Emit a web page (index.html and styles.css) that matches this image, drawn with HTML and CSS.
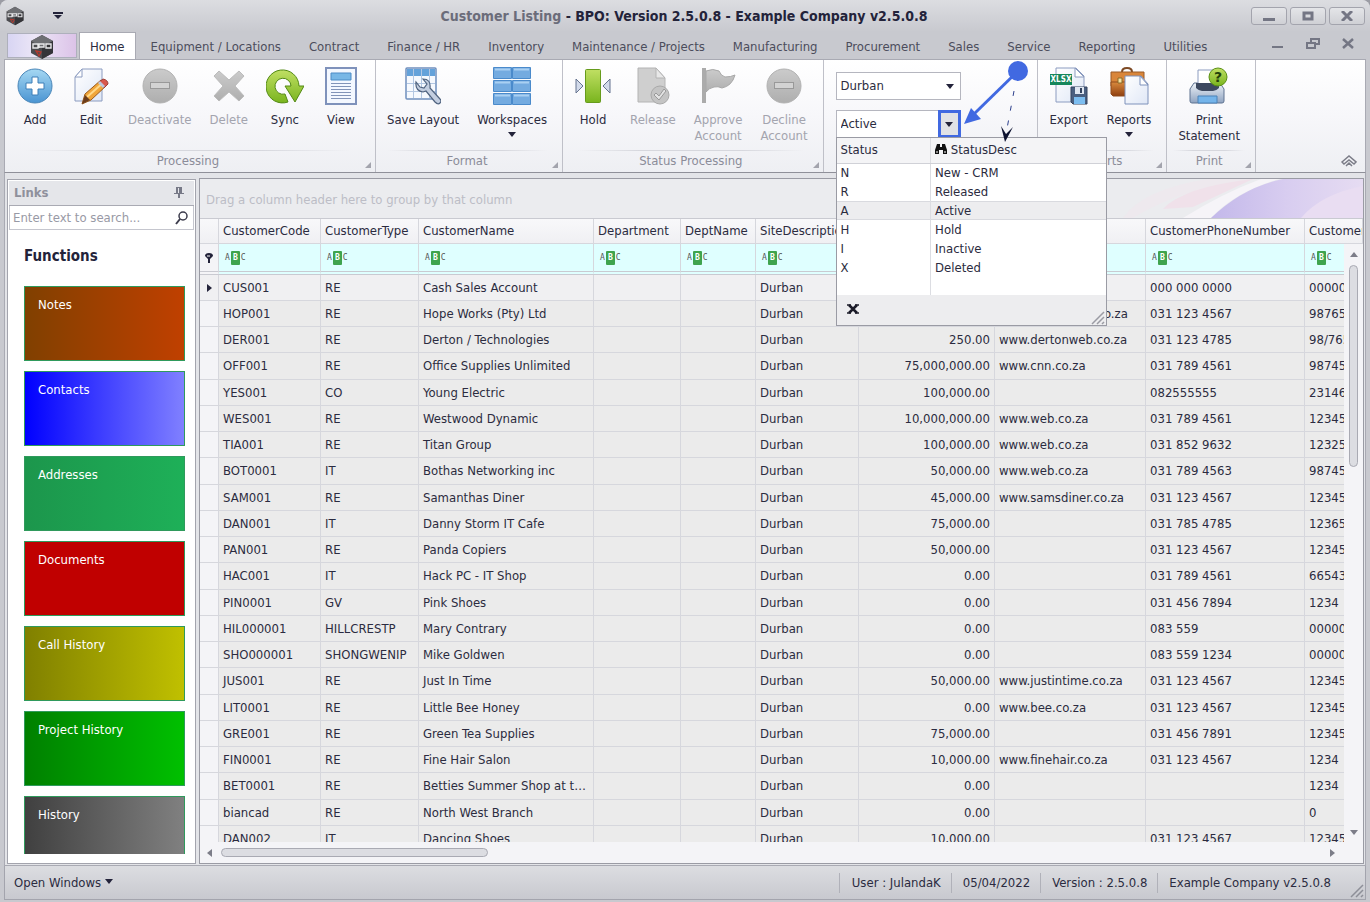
FILE: index.html
```html
<!DOCTYPE html>
<html lang="en">
<head>
  <meta charset="UTF-8">
  <title>Customer Listing - BPO</title>
  <meta name="viewport" content="width=device-width, initial-scale=1.0">
  <link rel="stylesheet" href="styles.css">
</head>
<body>
  <!-- shared icons -->
  <svg class="defs" width="0" height="0" aria-hidden="true">
    <defs>
      <linearGradient id="blueG" x1="0" y1="0" x2="0" y2="1"><stop offset="0" stop-color="#a5d8f3"/><stop offset="1" stop-color="#4a94d2"/></linearGradient>
      <linearGradient id="greyG" x1="0" y1="0" x2="0" y2="1"><stop offset="0" stop-color="#cbcbcb"/><stop offset="1" stop-color="#aeaeae"/></linearGradient>
      <linearGradient id="greenG" x1="0" y1="0" x2="0" y2="1"><stop offset="0" stop-color="#c0df63"/><stop offset="1" stop-color="#79b41e"/></linearGradient>
      <linearGradient id="pageG" x1="0" y1="0" x2="1" y2="1"><stop offset="0" stop-color="#ffffff"/><stop offset="1" stop-color="#dfe7f6"/></linearGradient>
      <linearGradient id="steelG" x1="0" y1="0" x2="0" y2="1"><stop offset="0" stop-color="#eef3f9"/><stop offset="1" stop-color="#8fa3c0"/></linearGradient>
      <linearGradient id="brownG" x1="0" y1="0" x2="0" y2="1"><stop offset="0" stop-color="#d98a3d"/><stop offset="1" stop-color="#8f3f10"/></linearGradient>
      <symbol id="logo" viewBox="0 0 24 26">
        <path d="M12 1 23 7v12l-11 6L1 19V7z" fill="#4b4b4f"/>
        <path d="M12 1 23 7l-11 6L1 7z" fill="#6e6f73"/>
        <path d="M12 13v12l11-6V7z" fill="#343438"/>
        <path d="M3 10h5v4H3zM9 14v-4h5v3H9M16 10h5v4h-5z" fill="none" stroke="#e8e8ea" stroke-width="1.4"/>
        <path d="m6 17 5 1-2 4z" fill="none" stroke="#b5392f" stroke-width="1.3"/>
      </symbol>
      <symbol id="minus" viewBox="0 0 36 36">
        <circle cx="18" cy="18" r="17" fill="url(#greyG)" stroke="#b2b2b2"/>
        <rect x="8.500" y="14.500" width="19" height="6" fill="#d3d3d3" stroke="#999"/>
      </symbol>
    </defs>
  </svg>

  <div class="window">
    <header class="titlebar">
      <svg class="app-icon" width="20" height="20"><use href="#logo"/></svg>
      <svg class="quick" width="10" height="8" viewBox="0 0 10 8"><path d="M0 0h10v2H0zM1 3h8L5 7z" fill="#23233a"/></svg>
      <h1><span>Customer Listing</span> - BPO: Version 2.5.0.8 - Example Company v2.5.0.8</h1>
      <div class="win-buttons">
        <button aria-label="Minimize"><svg width="12" height="10" viewBox="0 0 12 10"><path d="M0 7h12v3H0z" fill="#747684"/></svg></button>
        <button aria-label="Maximize"><svg width="12" height="10" viewBox="0 0 12 10"><path d="M2 2h8v6H2z" fill="none" stroke="#747684" stroke-width="3"/></svg></button>
        <button aria-label="Close"><svg width="12" height="10" viewBox="0 0 12 10"><path d="m1 0 10 10M11 0 1 10" stroke="#747684" stroke-width="3"/></svg></button>
      </div>
    </header>

    <nav class="tabs">
      <button class="app-button" aria-label="Application menu"><svg width="24" height="26"><use href="#logo"/></svg></button>
      <a class="active" href="#">Home</a>
      <a href="#">Equipment / Locations</a>
      <a href="#">Contract</a>
      <a href="#">Finance / HR</a>
      <a href="#">Inventory</a>
      <a href="#">Maintenance / Projects</a>
      <a href="#">Manufacturing</a>
      <a href="#">Procurement</a>
      <a href="#">Sales</a>
      <a href="#">Service</a>
      <a href="#">Reporting</a>
      <a href="#">Utilities</a>
      <div class="mdi-buttons">
        <button aria-label="Minimize window"><svg width="14" height="12" viewBox="0 0 14 12"><path d="M1 8h11v2H1z" fill="#747684"/></svg></button>
        <button aria-label="Restore window"><svg width="14" height="12" viewBox="0 0 14 12"><path d="M5 4V1h8v5h-3M1 5h8v5H1z" fill="none" stroke="#747684" stroke-width="2"/></svg></button>
        <button aria-label="Close window"><svg width="14" height="12" viewBox="0 0 14 12"><path d="m2 1 10 9M12 1 2 10" stroke="#747684" stroke-width="2.500"/></svg></button>
      </div>
    </nav>

    <section class="ribbon">
      <div class="group">
        <div class="tools">
          <button class="tool"><svg width="36" height="36" viewBox="0 0 36 36"><circle cx="18" cy="18" r="17" fill="url(#blueG)" stroke="#4a86b8"/><path d="M15 9h6v6h6v6h-6v6h-6v-6H9v-6h6z" fill="#fff" stroke="#3d7fb8"/></svg>Add</button>
          <button class="tool"><svg width="36" height="36" viewBox="0 0 36 36"><path d="M9 1h20v32H2V9z" fill="url(#pageG)" stroke="#8c9cc0"/><path d="M9 1v8H2z" fill="#fff" stroke="#8c9cc0"/><path d="m9 36 3-10L28 12l6 5-16 15z" fill="#f0a63a" stroke="#9a5a1c"/><path d="m14 29 17-15" stroke="#ffd98a" stroke-width="2"/><path d="m26 14 4-3q5 1 5 5l-4 4z" fill="#d9574c" stroke="#9d4038"/><path d="m25 15 5 5 2-2-5-5z" fill="#bcc6dc"/><path d="m9 36 3-9 5 5z" fill="#6a3c1c"/></svg>Edit</button>
          <button class="tool" disabled><svg width="36" height="36"><use href="#minus"/></svg>Deactivate</button>
          <button class="tool" disabled><svg width="36" height="36" viewBox="0 0 36 36"><path d="m8 3 10 9 10-9 5 5-9 10 9 10-5 5-10-9-10 9-5-5 9-10L3 8z" fill="url(#greyG)" stroke="#bcbcbc"/></svg>Delete</button>
          <button class="tool"><svg width="38" height="36" viewBox="0 0 38 36"><path d="M22 34A16.500 16.500 0 1 1 33 18h5l-9 16-10-16h6a8 8 0 1 0-6 8z" fill="url(#greenG)" stroke="#548a15"/></svg>Sync</button>
          <button class="tool"><svg width="32" height="38" viewBox="0 0 32 38"><path d="M1 1h30v36H1z" fill="#f4f8ff" stroke="#7f92bb" stroke-width="2"/><path d="M6 6h20v7H6z" fill="#78b7e6" stroke="#4c8bc6"/><path d="M6 16.500h20M6 19.500h20M6 22.500h20M6 25.500h20M6 28.500h20M6 31.500h20" stroke="#8294b8"/></svg>View</button>
        </div>
        <div class="caption">Processing</div>
      </div>
      <div class="group">
        <div class="tools">
          <button class="tool"><svg width="36" height="38" viewBox="0 0 36 38"><rect x="1" y="1" width="30" height="31" rx="1" fill="#f6f9fe" stroke="#6f8fbd" stroke-width="1.500"/><path d="M2 2h28v7H2z" fill="#64a2da"/><path d="M2 16.500h28M2 24.500h28M8.500 2v29M16.500 2v29M24.500 2v29" stroke="#b3c7e2"/><path d="M11 15q-1 9 7 10l3-1 9 11q3 3 5 1t0-4L25 21q1-9-7-9l4 5-3 4-4-1z" fill="#c3cee0" stroke="#50637f" stroke-width="1.200"/></svg>Save Layout</button>
          <button class="tool"><svg width="38" height="38" viewBox="0 0 38 38"><g fill="#74abe0" stroke="#4a8acb"><path d="M.5.5h18v11H.5zM19.500.5h18v11h-18zM.5 13.500h18v11H.5zM19.500 13.500h18v11h-18zM.5 26.500h18v11H.5zM19.500 26.500h18v11h-18z"/></g><path d="M2 2.500h15M21 2.500h15M2 15.500h15M21 15.500h15M2 28.500h15M21 28.500h15" stroke="#a9d0f2" stroke-width="2"/></svg>Workspaces<i class="arrow"></i></button>
        </div>
        <div class="caption">Format</div>
      </div>
      <div class="group">
        <div class="tools">
          <button class="tool"><svg width="36" height="36" viewBox="0 0 36 36"><rect x="10.500" y="1.500" width="15" height="33" rx="1" fill="url(#greenG)" stroke="#669b1c"/><path d="M1 11v14l7-7zM35 11v14l-7-7z" fill="#d2daea" stroke="#65738f"/></svg>Hold</button>
          <button class="tool" disabled><svg width="34" height="38" viewBox="0 0 34 38"><path d="M2 1h18l9 10v24H2z" fill="#cfcfcf" stroke="#b4b4b4"/><path d="M20 1v10h9z" fill="#e8e8e8" stroke="#b4b4b4"/><circle cx="24" cy="28" r="9" fill="#c4c4c4" stroke="#a9a9a9"/><path d="m18 28 2-2 3 3 5-7 2 2-7 9z" fill="#e3e3e3" stroke="#999"/></svg>Release</button>
          <button class="tool" disabled><svg width="36" height="38" viewBox="0 0 36 38"><path d="M2 1h4v35H2z" fill="#ababab"/><path d="M6 4q7-3 13 0 2 5 6 6 6 0 10-2-3 11-13 13-4-2-8-1-5 1-8 5z" fill="url(#greyG)" stroke="#a8a8a8"/></svg>Approve<br>Account</button>
          <button class="tool" disabled><svg width="36" height="36"><use href="#minus"/></svg>Decline<br>Account</button>
        </div>
        <div class="caption">Status Processing</div>
      </div>

      <div class="group filters">
        <select aria-label="Site"><option>Durban</option></select>
        <div class="combo">
          <input type="text" value="Active" aria-label="Status">
          <button aria-label="Open status list"><i class="arrow"></i></button>
        </div>

        <div class="popup">
          <table>
            <thead>
              <tr><th>Status</th><th><svg width="12" height="12" viewBox="0 0 12 12"><path d="M2 1h3v3h2V1h3l2 6v4H8V7H4v4H0V7z" fill="#111"/><path d="M2 8v2M10 8v2" stroke="#fff"/></svg> StatusDesc</th></tr>
            </thead>
            <tbody>
              <tr><td>N</td><td>New - CRM</td></tr>
              <tr><td>R</td><td>Released</td></tr>
              <tr class="selected"><td>A</td><td>Active</td></tr>
              <tr><td>H</td><td>Hold</td></tr>
              <tr><td>I</td><td>Inactive</td></tr>
              <tr><td>X</td><td>Deleted</td></tr>
              <tr class="filler"><td></td><td></td></tr>
            </tbody>
          </table>
          <div class="popup-foot">
            <button aria-label="Clear"><svg width="12" height="10" viewBox="0 0 12 10"><path d="m2 1 8 8M10 1 2 9" stroke="#1b1b28" stroke-width="2.500"/><path d="M0 1h4M8 1h4M0 9h4M8 9h4" stroke="#1b1b28" stroke-width="1.500"/></svg></button>
            <svg width="14" height="14" viewBox="0 0 14 14"><path d="M1 13 13 1M6 13l7-7M11 13l2-2" stroke="#9a9ba3" stroke-width="1.500"/></svg>
          </div>
        </div>

        <!-- callout arrows -->
        <svg class="callout" width="80" height="84" viewBox="0 0 80 84">
          <path d="M56 11 12 54" stroke="#4169e1" stroke-width="3"/>
          <path d="m2 64 7-16 10 11z" fill="#4169e1"/>
          <circle cx="56" cy="11" r="10" fill="#4169e1"/>
          <path d="M52 31 44 74" stroke="#2c3f8c" stroke-dasharray="5 10"/>
          <path d="m43 82-4-16 5 8 7-7z" fill="#0d1230"/>
        </svg>
      </div>

      <div class="group">
        <div class="tools">
          <button class="tool"><svg width="40" height="38" viewBox="0 0 40 38"><path d="M7 1h20l8 8v26H7z" fill="url(#pageG)" stroke="#8c9cc0"/><path d="M26 1v9h9z" fill="#fff" stroke="#8c9cc0"/><path d="M1 7h22v11H1z" fill="#16875c"/><text x="12" y="15" text-anchor="middle" class="xlsx">XLSX</text><path d="M22 20h16v17H24l-2-2z" fill="#4a5f80" stroke="#33435e"/><path d="M26 20h9v7h-9z" fill="#dfe6f1"/><path d="M31 21h2v5h-2z" fill="#33435e"/><path d="M25 30h11v7H25z" fill="#7cbdf0"/></svg>Export</button>
          <button class="tool"><svg width="40" height="38" viewBox="0 0 40 38"><path d="M13 5q0-4 5-4t5 4" fill="none" stroke="#7d4a24" stroke-width="2"/><path d="M2 5h33v14H2z" fill="#d9863a" stroke="#9a5a26"/><path d="M2 15h16v14H4l-2-2z" fill="url(#brownG)" stroke="#8f4b1c"/><path d="M9 11h4v5H9z" fill="#f6e3a5" stroke="#8a6a26"/><path d="M16 9h16l7 8v20H16z" fill="url(#pageG)" stroke="#7f92bb"/><path d="M31 9v9h8z" fill="#fff" stroke="#7f92bb"/></svg>Reports<i class="arrow"></i></button>
        </div>
        <div class="caption">Reports</div>
      </div>
      <div class="group">
        <div class="tools">
          <button class="tool"><svg width="40" height="38" viewBox="0 0 40 38"><path d="M1 34V22l4-6h26l4 6v12q0 2-2 2H3q-2 0-2-2z" fill="url(#steelG)" stroke="#5f7391"/><path d="M9 3h19v16H9z" fill="#fff" stroke="#8c9cc0"/><path d="M7 16h23v5q-3 3-6 3H13q-3 0-6-3z" fill="#3d4960"/><path d="M9 29h19v7H9z" fill="#74b4ea" stroke="#4b82b8"/><circle cx="29" cy="10" r="9" fill="url(#greenG)" stroke="#5a9015"/><text x="29" y="15" text-anchor="middle" class="question">?</text></svg>Print<br>Statement</button>
        </div>
        <div class="caption">Print</div>
      </div>
      <button class="collapse" aria-label="Collapse ribbon"><svg width="16" height="12" viewBox="0 0 16 12"><path d="m1 7 7-6 7 6-2 2-5-4-5 4zM5 11l3-3 3 3" fill="none" stroke="#7c7d88" stroke-width="1.500"/></svg></button>
    </section>

    <main>
      <aside class="links">
        <h2>Links <svg width="10" height="12" viewBox="0 0 10 12"><path d="M2 0h6v6h2v1H6v4H4V7H0V6h2z" fill="#777987"/><path d="M4 1h1v5H4z" fill="#e5e6ea"/></svg></h2>
        <div class="search">
          <input type="search" placeholder="Enter text to search..." aria-label="Search links">
          <svg width="14" height="14" viewBox="0 0 14 14"><circle cx="8" cy="5" r="4" fill="none" stroke="#3c3c4c" stroke-width="1.500"/><path d="m5 8-4 5" stroke="#3c3c4c" stroke-width="2"/></svg>
        </div>
        <h3>Functions</h3>
        <div class="tiles">
          <button class="notes">Notes</button>
          <button class="contacts">Contacts</button>
          <button class="addresses">Addresses</button>
          <button class="documents">Documents</button>
          <button class="calls">Call History</button>
          <button class="projects">Project History</button>
          <button class="history">History</button>
        </div>
      </aside>

      <section class="grid">
        <div class="group-bar">
          Drag a column header here to group by that column
          <svg width="240" height="39" viewBox="0 0 240 39">
            <defs>
              <linearGradient id="leaf" x1="0" y1="0" x2="1" y2="0"><stop offset="0" stop-color="#c3b8ea"/><stop offset=".5" stop-color="#d8cdf0"/><stop offset="1" stop-color="#e6dcf2"/></linearGradient>
            </defs>
            <path d="M10 39Q60 8 135 0h-50Q20 10 0 39z" fill="#eee9ee"/>
            <path d="M40 30Q60 8 130 0L70 28z" fill="#f0e1ea"/>
            <path d="M60 39Q100 14 138 0h18Q110 14 88 39z" fill="#f6f4f8"/>
            <path d="M88 39Q120 8 160 0h80v10q-20 20-50 29z" fill="url(#leaf)"/>
            <path d="M178 39q20-24 62-32v32z" fill="#e9ddf2"/>
          </svg>
        </div>
        <div class="viewport">
          <table class="customers">
            <colgroup>
              <col class="w-mark"><col class="w-code"><col class="w-type"><col class="w-name"><col class="w-dept"><col class="w-deptname">
              <col class="w-site"><col class="w-limit"><col class="w-web"><col class="w-phone"><col>
            </colgroup>
            <thead>
              <tr>
                <th></th><th>CustomerCode</th><th>CustomerType</th><th>CustomerName</th><th>Department</th><th>DeptName</th>
                <th>SiteDescription</th><th>CreditLimit</th><th>CustomerWebSite</th><th>CustomerPhoneNumber</th><th>CustomerFax</th>
              </tr>
              <tr class="filter-row" id="filterRow">
                <td><svg width="8" height="10" viewBox="0 0 8 10"><path d="M0 3a4 3 0 0 1 8 0L5 6v4H3V6z" fill="#23233a"/><path d="M2 3h3" stroke="#fff"/></svg></td>
              </tr>
            </thead>
            <tbody id="customerRows"></tbody>
          </table>
          <div class="vscroll"><i class="up"></i><span></span><i class="down"></i></div>
        </div>
        <div class="hscroll"><i class="left"></i><span></span><i class="right"></i></div>
      </section>
    </main>

    <footer>
      <button class="open-windows">Open Windows <i class="arrow"></i></button>
      <span>User : JulandaK</span>
      <span>05/04/2022</span>
      <span>Version : 2.5.0.8</span>
      <span>Example Company v2.5.0.8</span>
      <svg class="grip" width="14" height="14" viewBox="0 0 14 14"><path d="M1 13 13 1M6 13l7-7M11 13l2-2" stroke="#8e8f98" stroke-width="1.500"/></svg>
    </footer>
  </div>

  <script>
    // code, type, name, credit limit, website, phone, fax
    const customers = [
      ['CUS001', 'RE', 'Cash Sales Account', '0.00', '', '000 000 0000', '0000000000'],
      ['HOP001', 'RE', 'Hope Works (Pty) Ltd', '10,000.00', 'www.hopeworks.co.za', '031 123 4567', '9876543210'],
      ['DER001', 'RE', 'Derton / Technologies', '250.00', 'www.dertonweb.co.za', '031 123 4785', '98/765432'],
      ['OFF001', 'RE', 'Office Supplies Unlimited', '75,000,000.00', 'www.cnn.co.za', '031 789 4561', '9874561230'],
      ['YES001', 'CO', 'Young Electric', '100,000.00', '', '082555555', '2314678901'],
      ['WES001', 'RE', 'Westwood Dynamic', '10,000,000.00', 'www.web.co.za', '031 789 4561', '1234567890'],
      ['TIA001', 'RE', 'Titan Group', '100,000.00', 'www.web.co.za', '031 852 9632', '1232567890'],
      ['BOT0001', 'IT', 'Bothas Networking inc', '50,000.00', 'www.web.co.za', '031 789 4563', '9874561230'],
      ['SAM001', 'RE', 'Samanthas Diner', '45,000.00', 'www.samsdiner.co.za', '031 123 4567', '1234567890'],
      ['DAN001', 'IT', 'Danny Storm IT Cafe', '75,000.00', '', '031 785 4785', '1236547890'],
      ['PAN001', 'RE', 'Panda Copiers', '50,000.00', '', '031 123 4567', '1234567890'],
      ['HAC001', 'IT', 'Hack PC - IT Shop', '0.00', '', '031 789 4561', '6654321098'],
      ['PIN0001', 'GV', 'Pink Shoes', '0.00', '', '031 456 7894', '1234'],
      ['HIL000001', 'HILLCRESTP', 'Mary Contrary', '0.00', '', '083 559', '0000000000'],
      ['SHO000001', 'SHONGWENIP', 'Mike Goldwen', '0.00', '', '083 559 1234', '0000000000'],
      ['JUS001', 'RE', 'Just In Time', '50,000.00', 'www.justintime.co.za', '031 123 4567', '1234567890'],
      ['LIT0001', 'RE', 'Little Bee Honey', '0.00', 'www.bee.co.za', '031 123 4567', '1234567890'],
      ['GRE001', 'RE', 'Green Tea Supplies', '75,000.00', '', '031 456 7891', '1234567890'],
      ['FIN0001', 'RE', 'Fine Hair Salon', '10,000.00', 'www.finehair.co.za', '031 123 4567', '1234'],
      ['BET0001', 'RE', 'Betties Summer Shop at the Beach', '0.00', '', '', '1234'],
      ['biancad', 'RE', 'North West Branch', '0.00', '', '', '0'],
      ['DAN002', 'IT', 'Dancing Shoes', '10,000.00', '', '031 123 4567', '1234567890']
    ];

    const filterRow = document.getElementById('filterRow');
    for (let i = 0; i < 10; i++) {
      filterRow.insertAdjacentHTML('beforeend', '<td><span class="abc">A<b>B</b>C</span></td>');
    }

    document.getElementById('customerRows').innerHTML = customers.map(function(c, i) {
      const cells = [i === 0 ? '<i class="right"></i>' : '', c[0], c[1], c[2], '', '', 'Durban', c[3], c[4], c[5], c[6]];
      return '<tr><td>' + cells.join('</td><td>') + '</td></tr>';
    }).join('');
  </script>
</body>
</html>
```
FILE: styles.css
```css
* { box-sizing: border-box; }
body { margin: 0; background: #9b9ca4; color: #2b2b40; font-family: "DejaVu Sans Condensed", "Noto Sans", sans-serif; font-size: 13px; line-height: 16px; }
button, input, select { font: inherit; color: inherit; }
button { padding: 0; border: none; background: none; cursor: pointer; }
a { color: inherit; text-decoration: none; }
i { display: inline-block; width: 0; height: 0; }
.defs { position: absolute; }

.window { display: flex; flex-direction: column; height: 100vh; overflow: hidden; padding: 0 4px 2px; border-radius: 8px 8px 0 0; background: #c8c9cf; }

/* title bar */
.titlebar { display: flex; align-items: center; height: 32px; flex: none; margin: 0 -4px; padding: 0 5px; background: linear-gradient(#dcdde1, #c8c9cf); }
.quick { margin-left: 28px; }
.titlebar h1 { flex: 1; margin: 0 0 0 54px; text-align: center; font-size: 14px; color: #23233a; }
.titlebar h1 span { color: #6b6c7a; }
.win-buttons { display: flex; gap: 3px; }
.win-buttons button { width: 36px; height: 18px; border: 1px solid #a3a4ad; border-radius: 3px; background: linear-gradient(#e4e5e8, #cfd0d5); line-height: 0; }

/* ribbon tabs */
.tabs { display: flex; height: 27px; flex: none; color: #4c4d5c; }
.tabs a { padding: 7px 14px 0; white-space: nowrap; }
.tabs a.active { padding: 6px 10px 0; margin-right: 1px; border: 1px solid #a9aab3; border-bottom: none; background: #fff; color: #2b2b40; }
.app-button { width: 70px; height: 25px; margin: 1px 2px 0 3px; border: 1px solid #aeb0bc; background: linear-gradient(90deg, #d8d5f3, #ece6f7 40%, #dcc3e8); line-height: 0; }
.mdi-buttons { display: flex; gap: 21px; margin-left: auto; padding-right: 11px; }

/* ribbon */
.ribbon { display: flex; position: relative; height: 114px; flex: none; border: 1px solid #a9aab3; border-bottom-color: #8f9099; background: linear-gradient(#ffffff, #f7f7fa 50%, #eeeff3); }
.group { display: flex; flex-direction: column; position: relative; padding: 0 6px 0 2px; border-right: 1px solid #bfc0c8; }
.tools { display: flex; flex: 1; }
.tool { display: flex; flex-direction: column; align-items: center; min-width: 56px; padding: 7px 9px 0; white-space: nowrap; text-align: center; }
.tool svg { flex: none; height: 38px; margin-bottom: 7px; }
.tool:disabled { color: #a3a4ae; }
.arrow { border: 4px solid transparent; border-top: 5px solid #23233a; border-bottom: none; }
.tool .arrow { margin-top: 4px; }
.caption { height: 22px; padding-top: 3px; background: linear-gradient(90deg, transparent 5%, #d6d7dd 30%, #d6d7dd 70%, transparent 95%) no-repeat top / 100% 1px; text-align: center; color: #8b8c99; }
.caption::after { content: ""; position: absolute; right: 4px; bottom: 4px; border-left: 6px solid transparent; border-bottom: 6px solid #a3a4ad; }
.xlsx { font: bold 8px "DejaVu Sans Condensed", sans-serif; fill: #fff; }
.question { font: bold 14px "DejaVu Sans", sans-serif; fill: #23400a; }
.collapse { position: absolute; right: 8px; bottom: 5px; line-height: 0; }

.filters { width: 214px; padding: 12px 0 0 12px; gap: 10px; }
.filters select { width: 125px; height: 28px; padding: 0 4px; border: 1px solid #b5b6bf; border-radius: 0; appearance: none; background: #fff url("data:image/svg+xml,%3Csvg xmlns='http://www.w3.org/2000/svg' width='8' height='5'%3E%3Cpath d='M0 0h8L4 5z' fill='%2323233a'/%3E%3C/svg%3E") no-repeat right 6px center; }
.combo { display: flex; width: 125px; height: 28px; }
.combo input { flex: 1; min-width: 0; padding: 0 4px; border: 1px solid #b5b6bf; border-right: none; background: #fff; }
.combo button { width: 23px; border: 3px solid #4169e1; background: #e1e2e6; line-height: 0; }
.callout { position: absolute; left: 138px; top: 0; z-index: 3; }

/* status lookup */
.popup { position: absolute; left: 12px; top: 77px; z-index: 2; width: 271px; height: 189px; border: 1px solid #9a9ba4; background: #ededef; display: flex; flex-direction: column; }
.popup table { width: 100%; border-collapse: collapse; background: #fff; }
.popup th { height: 25px; padding: 0 4px; border-bottom: 1px solid #d0d1d7; background: #f4f4f6; font-weight: normal; text-align: left; }
.popup th:first-child { width: 94px; }
.popup th svg { vertical-align: -1px; }
.popup td { height: 19px; padding: 0 4px; }
.popup th:first-child, .popup td:first-child { border-right: 1px solid #dcdde2; }
.popup .selected td { background: #ededef; box-shadow: inset 0 1px #d9dadf, inset 0 -1px #d9dadf; }
.popup .filler td { height: 18px; }
.popup-foot { display: flex; flex: 1; align-items: center; justify-content: space-between; padding: 0 1px 0 10px; }
.popup-foot > svg { align-self: flex-end; }

/* body */
main { display: flex; flex: 1; min-height: 0; gap: 3px; padding: 5px 1px 1px 2px; border: 1px solid #a9aab3; border-top: none; background: #e3e4e8; }
.links { display: flex; flex-direction: column; width: 189px; margin-top: 1px; padding: 1px 1px 9px; border: 1px solid #a3a4ad; background: #fff; overflow: hidden; }
.links h2 { display: flex; flex: none; align-items: center; justify-content: space-between; height: 25px; margin: 0; padding: 0 10px 0 5px; background: #e5e6ea; border-bottom: 1px solid #a9aab3; color: #8f909c; font-size: 13px; }
.search { display: flex; flex: none; align-items: center; height: 24px; padding-right: 4px; border: 1px solid #c5c6ce; border-top: none; }
.search input { flex: 1; min-width: 0; padding: 0 3px; border: none; }
.search input::placeholder { color: #9899a5; }
.links h3 { flex: none; margin: 17px 15px 21px; font-size: 15px; line-height: 18px; color: #23233a; }
.tiles { display: flex; flex-direction: column; flex: 1; min-height: 0; gap: 10px; margin: 0 9px 0 15px; overflow: hidden; }
.tiles button { flex: none; display: flex; height: 75px; padding: 10px 13px; border: 1px solid #2f9a5c; color: #fff; }
.notes { background: linear-gradient(90deg, #804000, #c04000); }
.contacts { background: linear-gradient(90deg, #0000ff, #8080ff); }
.addresses { background: linear-gradient(90deg, #1c964c, #1eb058); }
.documents { background: #c00000; }
.calls { background: linear-gradient(90deg, #808000, #c0c000); }
.projects { background: linear-gradient(90deg, #008000, #00c000); }
.history { background: linear-gradient(90deg, #404040, #808080); }

/* customer grid */
.grid { display: flex; flex-direction: column; flex: 1; min-width: 0; border: 1px solid #9a9ba4; background: #f4f4f7; }
.group-bar { position: relative; flex: none; height: 40px; padding: 13px 6px; background: #ebecef; border-bottom: 1px solid #c9cad1; color: #bcbdc6; }
.group-bar svg { position: absolute; right: 0; top: 0; }
.viewport { position: relative; flex: 1; min-height: 0; overflow: hidden; }
.customers { width: 100%; table-layout: fixed; border-collapse: separate; border-spacing: 0; }
.customers th, .customers td { height: 26px; padding: 0 4px; border-right: 1px solid #d6d7dd; border-bottom: 1px solid #d6d7dd; overflow: hidden; white-space: nowrap; text-overflow: ellipsis; font-weight: normal; text-align: left; }
.customers th { height: 25px; background: linear-gradient(#f8f8fa, #f0f0f3); text-overflow: clip; }
.customers tbody td { background: #ebebeb; }
.customers tbody tr:first-child td { background: #f0f0f2; }
.customers tbody tr:nth-child(4n) td { height: 27px; }
.customers tr td:first-child { background: #f4f4f7; text-align: center; line-height: 0; }
.customers tbody td:nth-child(8) { text-align: right; }
.customers td:last-child { text-overflow: clip; }
.filter-row td { height: 31px; background: #dfffff; border-bottom: 4px double #c9cad1; line-height: 0; }
.w-mark { width: 19px; }
.w-code { width: 102px; }
.w-type { width: 98px; }
.w-name { width: 175px; }
.w-dept { width: 87px; }
.w-deptname { width: 75px; }
.w-site { width: 103px; }
.w-limit { width: 136px; }
.w-web { width: 151px; }
.w-phone { width: 159px; }
.abc { display: inline-flex; align-items: center; margin-left: 2px; font: 8px/14px "DejaVu Sans Mono", monospace; color: #555; }
.abc b { width: 9px; margin: 0 1px; border-radius: 1px; background: #3fa44e; color: #fff; text-align: center; }

/* scroll bars */
.up { border: 4px solid transparent; border-bottom: 5px solid #7c7d88; border-top: none; }
.down { border: 4px solid transparent; border-top: 5px solid #7c7d88; border-bottom: none; }
.left { border: 4px solid transparent; border-right: 5px solid #7c7d88; border-left: none; }
.right { border: 4px solid transparent; border-left: 5px solid #7c7d88; border-right: none; }
.customers .right { border-left-color: #23233a; }
.vscroll { position: absolute; right: 0; top: 25px; bottom: 0; width: 19px; display: flex; flex-direction: column; align-items: center; padding: 8px 0 7px; background: #f4f4f7; }
.vscroll span { width: 9px; height: 202px; margin: 8px 0 auto; border: 1px solid #a9aab3; border-radius: 5px; background: #dcdde2; }
.hscroll { display: flex; flex: none; align-items: center; height: 21px; padding: 0 28px 0 7px; }
.hscroll span { width: 267px; height: 9px; margin: 0 auto 0 9px; border: 1px solid #a9aab3; border-radius: 5px; background: #dcdde2; }

/* status bar */
footer { display: flex; align-items: center; flex: none; height: 34px; padding-right: 24px; border: 1px solid #a3a4ad; border-top: none; background: linear-gradient(#dcdde1, #c8c9cf); position: relative; }
footer span { padding: 2px 10px 2px 11px; border-left: 1px solid #b0b1b9; }
footer span:nth-of-type(1) { padding-left: 12px; }
.open-windows { margin: 0 auto 0 9px; }
.open-windows .arrow { vertical-align: 3px; }
.grip { position: absolute; right: 1px; bottom: 1px; }
```
